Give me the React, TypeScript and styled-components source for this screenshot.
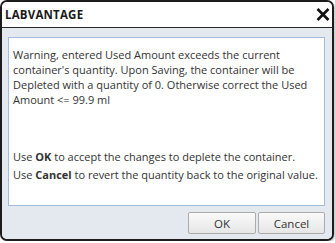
import styled, { createGlobalStyle } from 'styled-components';

const GlobalStyle = createGlobalStyle`
  html, body {
    margin: 0;
    padding: 0;
    background: #ffffff;
  }
  body {
    font-family: "Open Sans", "Liberation Sans", sans-serif;
  }
`;

const Dialog = styled.div`
  width: 334px;
  height: 241px;
  box-sizing: border-box;
  border: 2px solid #1c1c1c;
  border-radius: 7px;
  overflow: hidden;
  display: flex;
  flex-direction: column;
  background: #ffffff;
  box-shadow: 1px 1px 2px rgba(0, 0, 0, 0.25);
`;

const TitleBar = styled.div`
  height: 25px;
  flex: none;
  display: flex;
  align-items: center;
  justify-content: space-between;
  padding: 0 1px 0 3px;
  border-bottom: 1px solid #2a2a2a;
  background: #ffffff;
`;

const Title = styled.span`
  font-size: 11.5px;
  font-weight: 700;
  color: #1a1a1a;
  letter-spacing: 0.2px;
`;

const CloseButton = styled.button`
  width: 16px;
  height: 16px;
  padding: 0;
  border: none;
  background: none;
  display: flex;
  align-items: center;
  justify-content: center;
  cursor: pointer;
`;

const Body = styled.div`
  flex: 1;
  display: flex;
  flex-direction: column;
  gap: 6px;
  padding: 9px 7px 5px 6px;
  background: #e4e9f0;
`;

const MessageBox = styled.div`
  flex: 1;
  background: #ffffff;
  border: 1px solid #a4bddd;
  padding: 9px 4px;
  color: #333333;
  font-size: 11px;
  white-space: nowrap;
`;

const Warning = styled.p`
  margin: 0 0 41px 0;
  line-height: 15px;
`;

const Hint = styled.p`
  margin: 0;
  line-height: 18px;
`;

const ButtonRow = styled.div`
  display: flex;
  justify-content: flex-end;
  gap: 2px;
`;

const Button = styled.button<{ $width: number }>`
  width: ${props => props.$width}px;
  height: 22px;
  box-sizing: border-box;
  border: 1px solid #ababab;
  border-radius: 2px;
  background: linear-gradient(#fafafa, #e6e6e6);
  font-family: "Open Sans", "Liberation Sans", sans-serif;
  font-size: 11.5px;
  color: #333333;
  padding: 0;
  cursor: pointer;
`;

function App() {
  return (
    <>
      <GlobalStyle />
      <Dialog>
        <TitleBar>
          <Title>LABVANTAGE</Title>
          <CloseButton aria-label="Close">
            <svg width="14" height="13" viewBox="0 0 14 13">
              <path d="M1.5 1 L12.5 12 M12.5 1 L1.5 12" stroke="#111" strokeWidth="2.6" fill="none" />
            </svg>
          </CloseButton>
        </TitleBar>
        <Body>
          <MessageBox>
            <Warning>
              Warning, entered Used Amount exceeds the current<br />
              container's quantity. Upon Saving, the container will be<br />
              Depleted with a quantity of 0. Otherwise correct the Used<br />
              Amount &lt;= 99.9 ml
            </Warning>
            <Hint>Use <b>OK</b> to accept the changes to deplete the container.</Hint>
            <Hint>Use <b>Cancel</b> to revert the quantity back to the original value.</Hint>
          </MessageBox>
          <ButtonRow>
            <Button $width={68}>OK</Button>
            <Button $width={67}>Cancel</Button>
          </ButtonRow>
        </Body>
      </Dialog>
    </>
  );
}

export default App;
